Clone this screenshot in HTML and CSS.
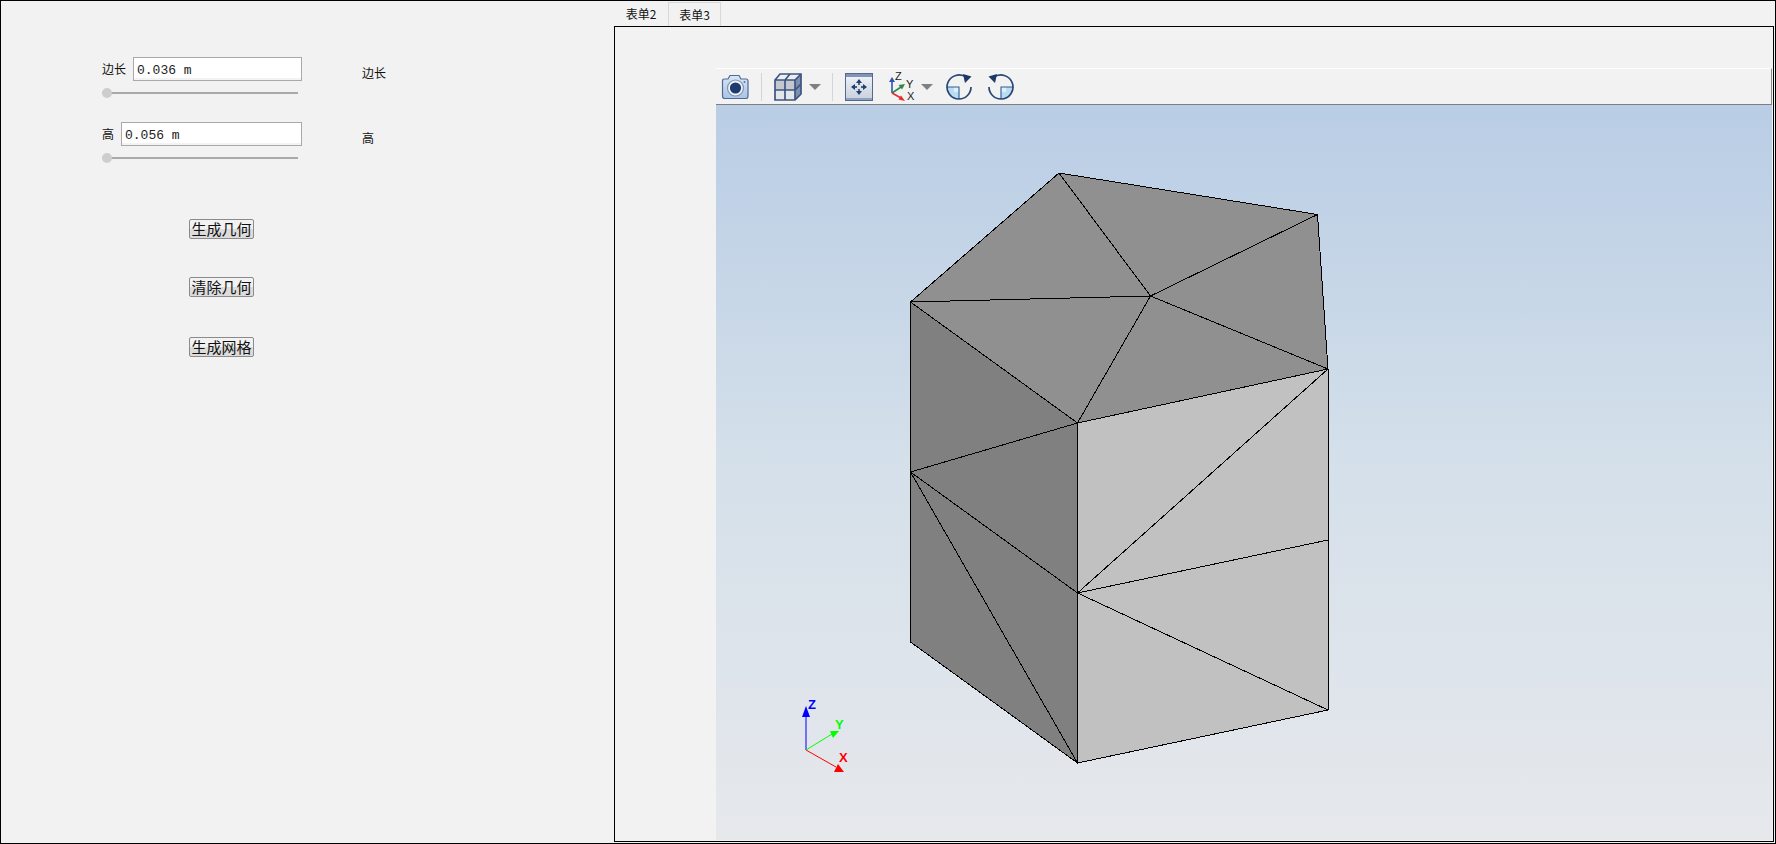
FILE: index.html
```html
<!DOCTYPE html>
<html lang="zh-CN">
<head>
<meta charset="utf-8">
<title>表单3</title>
<link rel="stylesheet" href="styles.css">
</head>
<body>
<div class="window">
  <section class="form">
    <div class="param">
      <div class="param-main">
        <div class="param-row"><label class="label">边长</label><input class="input" value="0.036 m"></div>
        <div class="slider"></div>
      </div>
      <span class="label side">边长</span>
    </div>
    <div class="param">
      <div class="param-main">
        <div class="param-row"><label class="label">高</label><input class="input" value="0.056 m"></div>
        <div class="slider"></div>
      </div>
      <span class="label side">高</span>
    </div>
    <div class="actions">
      <button class="btn">生成几何</button>
      <button class="btn">清除几何</button>
      <button class="btn btn-last">生成网格</button>
    </div>
  </section>
  <section class="workspace">
    <div class="tabs">
      <div class="tab tab-first">表单2</div>
      <div class="tab tab-active">表单3</div>
    </div>
    <div class="panel">
      <div class="viewer">
        <div class="toolbar">
          <svg class="ico camera" width="28" height="26" viewBox="0 0 28 26">
            <defs><linearGradient id="cam" x1="0" y1="0" x2="0" y2="1"><stop offset="0" stop-color="#d9e6f5"/><stop offset="1" stop-color="#a9c4e4"/></linearGradient></defs>
            <path d="M1.5 7 Q1.5 5 3.5 5 H7 L9 1.5 H18 L20 5 H25 Q27 5 27 7 V22 Q27 24.5 25 24.5 H3.5 Q1.5 24.5 1.5 22 Z" fill="url(#cam)" stroke="#4f6a95" stroke-width="1.2"/>
            <circle cx="14.5" cy="14" r="8" fill="#eef3f9" stroke="#7d94b6" stroke-width="1.2"/>
            <circle cx="14.5" cy="14" r="5.6" fill="#1f3a6e"/>
            <circle cx="23.5" cy="8" r="1" fill="#5b7299"/>
          </svg>
          <span class="sep"></span>
          <svg class="ico cube" width="28" height="28" viewBox="0 0 28 28" fill="none">
            <path d="M1 7 L6 1 H27 V21 L21 27 H1 Z" fill="#e4e6ea"/>
            <path d="M1 7 H21 V17 H1 Z" fill="#c4c8ce"/>
            <path d="M1 7 L6 1 H27 L21 7 Z" fill="#eceef1"/>
            <path d="M21 7 L27 1 V21 L21 27 Z" fill="#7d90ad"/>
            <path d="M1 7 L6 1 H27 V21 L21 27 H1 Z M1 7 H21 L27 1 M21 7 V27 M1 17 H21 L27 11 M11 7 V27 M11 7 L16 1" stroke="#3c5580" stroke-width="1.7"/>
          </svg>
          <span class="drop"></span>
          <span class="sep sep-b"></span>
          <svg class="ico fit" width="28" height="28" viewBox="0 0 28 28">
            <defs><linearGradient id="fitbg" x1="0" y1="0" x2="0" y2="1"><stop offset="0" stop-color="#f2f4f8"/><stop offset="1" stop-color="#c6cfdd"/></linearGradient></defs>
            <rect x="0.5" y="0.5" width="27" height="27" fill="url(#fitbg)" stroke="#54698c"/>
            <rect x="1" y="1" width="26" height="3" fill="#7f95b8"/>
            <rect x="1" y="25" width="26" height="2" fill="#8ea2c0"/>
            <g fill="none" stroke="#24344f" stroke-width="1.4">
              <path d="M14 10 V12 M14 16 V18 M10 14 H12 M16 14 H18"/>
            </g>
            <g fill="#1d3f73">
              <path d="M14 6 L11 10 H17 Z M14 22 L11 18 H17 Z M6 14 L10 11 V17 Z M22 14 L18 11 V17 Z"/>
            </g>
          </svg>
          <svg class="ico axes" width="26" height="30" viewBox="0 0 26 30">
            <path d="M3 21 V9" stroke="#2a55b5" stroke-width="1.6"/>
            <path d="M3 5 L0 10 H6 Z" fill="#2a55b5"/>
            <path d="M3 21 L12 15" stroke="#2a8a45" stroke-width="1.6"/>
            <path d="M16 12 L9.5 13 L13 17.5 Z" fill="#2a8a45"/>
            <path d="M3 21 L12 26" stroke="#e52d2d" stroke-width="1.6"/>
            <path d="M16 29 L12 23.5 L9.5 27.5 Z" fill="#e52d2d"/>
            <text x="6" y="8" class="axis-text">Z</text>
            <text x="17" y="16" class="axis-text">Y</text>
            <text x="18" y="28" class="axis-text">X</text>
          </svg>
          <span class="drop drop-b"></span>
          <svg class="ico rot" width="26" height="26" viewBox="0 0 26 26" fill="none">
            <path d="M1 13 H13 V25 A12 12 0 0 1 1 13 Z" fill="#b9dcf3"/>
            <path d="M8 13 H13 V18 H8 Z" fill="#dff0fb"/>
            <path d="M1 13 H13 V25" stroke="#2c5d97" stroke-width="1.1"/>
            <path d="M13 25 A12 12 0 1 1 20.5 3.6 M25 13 A12 12 0 0 1 13 25" stroke="#2a4673" stroke-width="1.7"/>
            <path d="M17 0 L25.5 2.5 L19 9 Z" fill="#1c3768"/>
          </svg>
          <svg class="ico rot rot-b" width="26" height="26" viewBox="0 0 26 26" fill="none">
            <path d="M25 13 H13 V25 A12 12 0 0 0 25 13 Z" fill="#b9dcf3"/>
            <path d="M13 13 H18 V18 H13 Z" fill="#dff0fb"/>
            <path d="M25 13 H13 V25" stroke="#2c5d97" stroke-width="1.1"/>
            <path d="M13 25 A12 12 0 1 0 5.5 3.6 M1 13 A12 12 0 0 0 13 25" stroke="#2a4673" stroke-width="1.7"/>
            <path d="M9 0 L0.5 2.5 L7 9 Z" fill="#1c3768"/>
          </svg>
        </div>
        <div class="scene">
          <svg class="mesh" viewBox="716 105 1056 735" width="1056" height="735">
            <polygon class="f-top" points="1059,173 1317.5,214.5 1328,369 1077.5,423 910.5,302"/>
            <polygon class="f-left" points="910.5,302 1077.5,423 1077.5,763 910.5,642"/>
            <polygon class="f-right" points="1077.5,423 1328,369 1328,710 1077.5,763"/>
            <g class="edges">
              <path d="M910.5 302 L1059 173 L1317.5 214.5 L1328 369"/>
              <path d="M1059 173 L1150.5 296 M1317.5 214.5 L1150.5 296 M910.5 302 L1150.5 296 M1150.5 296 L1328 369 M1150.5 296 L1077.5 423"/>
              <path d="M910.5 302 L1077.5 423 L1328 369"/>
              <path d="M910.5 302 V642 M1077.5 423 V763 M1328 369 V710"/>
              <path d="M910.5 472 L1077.5 423 M910.5 472 L1077.5 593 M910.5 472 L1077.5 763 M910.5 642 L1077.5 763 L1328 710"/>
              <path d="M1077.5 593 L1328 369 M1077.5 593 L1328 540 M1077.5 593 L1328 710"/>
            </g>
            <g class="triad">
              <path d="M806 750 V716" stroke="#0000ff"/>
              <path d="M806 706 L802 717 H810 Z" fill="#0000ff"/>
              <text x="808" y="709" class="t-z">Z</text>
              <path d="M806 750 L832 734" stroke="#00ff00"/>
              <path d="M830 731 L839 731 L833 738 Z" fill="#00ff00"/>
              <text x="835" y="729" class="t-y">Y</text>
              <path d="M806 750 L836 767" stroke="#ff0000"/>
              <path d="M838 764 L844 772 L834 772 Z" fill="#ff0000"/>
              <text x="839" y="762" class="t-x">X</text>
            </g>
          </svg>
        </div>
      </div>
    </div>
  </section>
</div>
</body>
</html>
```

FILE: styles.css
```css
* { box-sizing: border-box; }
html, body { margin: 0; padding: 0; }
body {
  width: 1776px;
  height: 844px;
  overflow: hidden;
  background: #f2f2f2;
  font-family: "Noto Sans CJK SC", "Liberation Sans", sans-serif;
  color: #111;
}
.window {
  display: flex;
  width: 1776px;
  height: 844px;
  border: 1px solid #000;
  background: #f2f2f2;
}
.form {
  width: 613px;
  flex: none;
  padding: 56px 0 0 101px;
}
.param {
  display: grid;
  grid-template-columns: 200px auto;
  column-gap: 60px;
  align-items: start;
  margin-bottom: 24px;
}
.param-row {
  display: flex;
  align-items: center;
  gap: 7px;
}
.label {
  font-size: 12px;
  line-height: 16px;
  white-space: nowrap;
}
.side { margin-top: 8px; }
.input {
  flex: 1;
  min-width: 0;
  height: 24px;
  padding: 2px 3px 0;
  border: 1px solid #a9a9a9;
  background: #fff;
  font-family: "Liberation Mono", monospace;
  font-size: 13px;
  color: #222;
  outline: none;
  box-shadow: inset 0 -2px 0 #f3f3f3;
}
.slider {
  position: relative;
  width: 196px;
  height: 10px;
  margin-top: 7px;
  padding-top: 4px;
}
.slider::before {
  content: "";
  display: block;
  height: 2px;
  background: #a9a9a9;
}
.slider::after {
  content: "";
  position: absolute;
  left: 0;
  top: 0;
  width: 10px;
  height: 10px;
  border-radius: 50%;
  background: #cdcdcd;
}
.actions {
  display: flex;
  flex-direction: column;
  align-items: flex-start;
  gap: 38px;
  margin: 56px 0 0 87px;
}
.btn {
  width: 65px;
  height: 20px;
  padding: 0;
  border: 1px solid #8b8b8b;
  border-radius: 2px;
  background: linear-gradient(#f2f2f2 0 50%, #dcdcdc 50% 100%);
  font-family: "Noto Sans CJK SC", sans-serif;
  font-size: 15px;
  line-height: 18px;
  color: #111;
}
.btn-last { margin-top: 2px; }
.workspace {
  flex: 1;
  min-width: 0;
  display: flex;
  flex-direction: column;
  padding: 1px 1px 1px 0;
}
.tabs {
  display: flex;
  height: 24px;
  flex: none;
}
.tab {
  width: 53px;
  font-size: 12px;
  line-height: 24px;
  text-align: center;
}
.tab-first { width: 54px; }
.tab-active {
  background: #f2f2f2;
  border: 1px solid #d9d9d9;
  border-bottom: 0;
}
.panel {
  flex: 1;
  min-height: 0;
  border: 1px solid #000;
  background: #f2f2f2;
  padding: 41px 1px 1px 101px;
}
.viewer {
  display: flex;
  flex-direction: column;
  height: 100%;
}
.toolbar {
  display: flex;
  align-items: center;
  flex: none;
  height: 37px;
  padding: 0 0 0 5px;
  background: #f2f2f2;
  border-top: 1px solid #fff;
  border-right: 1px solid #8a8a8a;
  border-bottom: 1px solid #7f7f7f;
}
.ico { flex: none; display: block; }
.sep {
  flex: none;
  width: 1px;
  height: 28px;
  margin: 0 12px;
  background: #d4d4d4;
}
.drop {
  flex: none;
  width: 0;
  height: 0;
  margin-left: 7px;
  border-left: 6px solid transparent;
  border-right: 6px solid transparent;
  border-top: 6px solid #808080;
}
.sep-b { margin: 0 12px 0 11px; }
.axes { margin-left: 16px; overflow: visible; }
.drop-b { margin-left: 6px; }
.rot { margin-left: 13px; }
.rot-b { margin-left: 16px; }
.axis-text {
  font-family: "Liberation Sans", sans-serif;
  font-size: 11px;
  fill: #222;
}
.scene {
  position: relative;
  flex: 1;
  min-height: 0;
  background: linear-gradient(#b9cde5, #d5e0ea 50%, #e6e8ec);
}
.mesh { position: absolute; left: 0; top: 0; display: block; }
.f-top { fill: #909090; }
.f-left { fill: #808080; }
.f-right { fill: #c1c1c1; }
.edges { fill: none; stroke: #000; stroke-width: 1; shape-rendering: crispEdges; }
.triad path { stroke-width: 1; }
.triad text {
  font-family: "Liberation Sans", sans-serif;
  font-size: 13px;
  font-weight: 700;
}
.t-z { fill: #0000ff; }
.t-y { fill: #00ff00; }
.t-x { fill: #ff0000; }
```
